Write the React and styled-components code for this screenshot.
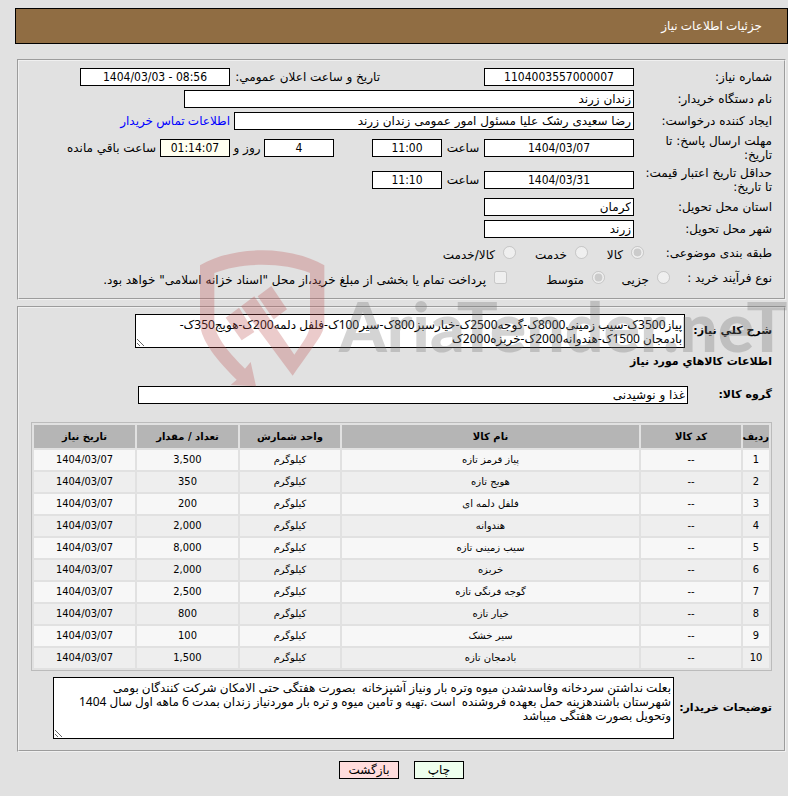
import React from 'react'
import styled, { createGlobalStyle } from 'styled-components'

const text = '"DejaVu Sans", Tahoma, sans-serif'
const digits = '"DejaVu Sans Condensed", Tahoma, sans-serif'
const mixed = '"Noto Sans", "DejaVu Sans", Tahoma, sans-serif'

const GlobalStyle = createGlobalStyle`
* {
box-sizing: border-box;
}
body {
margin: 0;
background-color: #e1e1e1;
color: #000;
font-family: ${text};
font-size: 12px;
line-height: 14px;
}
`
const Page = styled.div`
position: relative;
direction: rtl;
padding: 8px 0 16px 15px;
overflow: hidden;
`
const Header = styled.header`
display: flex;
align-items: center;
height: 36px;
padding: 0 25px;
border: 1px solid #000;
background-color: #906d43;
color: white;
`
const Title = styled.h1`
margin: 0;
font-family: ${mixed};
font-size: 12px;
font-weight: 400;
`
const Main = styled.main`
display: flex;
flex-direction: column;
grid-gap: 6px;
padding: 15px 2px 0;
`
const Panel = styled.fieldset`
margin: 0;
padding: ${props => props.$top}px 12px ${props => props.$bottom}px;
border: 2px groove #f0f0f0;
min-width: 0;
`
const Row = styled.div`
display: flex;
align-items: center;
min-height: ${props => props.$height || 22}px;
`
const Label = styled.label`
flex: none;
width: ${props => props.$width || 138}px;
`
const RowTitle = styled.span`
flex: none;
width: ${props => props.$width}px;
`
const LabelText = styled.span`
display: block;
width: 128px;
`
const SideLabel = styled.label`
flex: none;
width: 150px;
margin-right: 104px;
`
const Between = styled.label`
flex: none;
width: ${props => props.$width}px;
text-align: center;
`
const Field = styled.input`
flex: none;
width: ${props => props.$width}px;
max-width: 100%;
height: 18px;
margin: 0;
padding: 0 2px;
border: 1px solid #000;
background-color: ${props => props.$cream ? "#fffff0" : "#fff"};
color: #000;
font-family: ${props => props.$center ? digits : text};
font-size: 12px;
text-align: ${props => props.$center ? "center" : "right"};
`
const Spacer = styled.span`
flex: none;
width: 38px;
`
const Remaining = styled.span`
margin-right: 4px;
`
const Link = styled.a`
margin-right: 4px;
color: #00f;
font-family: ${mixed};
text-decoration: none;
`
const Option = styled.label`
display: flex;
align-items: center;
flex: none;
width: ${props => props.$width ? props.$width + "px" : "auto"};
grid-gap: 8px;
padding-top: 3px;
white-space: nowrap;
`
const Tick = styled.input`
flex: none;
width: 13px;
height: 13px;
margin: 0 0 4px;
`
const BoldLabel = styled.label`
flex: none;
width: ${props => props.$width}px;
font-size: 11px;
font-weight: 700;
white-space: nowrap;
`
const SubTitle = styled.h2`
margin: 0;
padding: 7px 0;
font-size: 11px;
font-weight: 700;
line-height: 14px;
`
const Area = styled.textarea`
display: block;
width: ${props => props.$width}px;
max-width: 100%;
height: ${props => props.$height}px;
margin: 0;
padding: 3px 2px 0;
border: 1px solid #000;
background-color: #fff;
color: #000;
font-family: ${mixed};
font-size: 12px;
line-height: 14px;
overflow: hidden;
`
const Table = styled.table`
width: 100%;
margin-top: 8px;
table-layout: fixed;
border: 1px solid #bbb;
border-collapse: separate;
border-spacing: 2px;
font-size: 11px;
text-align: center;
`
const Th = styled.th`
width: ${props => props.$width ? props.$width + "px" : "auto"};
height: 23px;
padding: 0;
background-color: #b5b5b5;
font-size: 10px;
white-space: nowrap;
`
const Tr = styled.tr`
background-color: #f7f7f7;
&:nth-child(even) {
background-color: #eee;
}
`
const Td = styled.td`
height: 20px;
padding: 0;
font-family: ${props => props.$digits ? digits : text};
font-size: ${props => props.$digits ? 11 : 10}px;
`
const Buttons = styled.div`
display: flex;
justify-content: center;
grid-gap: 15px;
padding-top: 3px;
`
const Button = styled.button`
width: ${props => props.$width}px;
height: 18px;
padding: 0;
border: 1px solid #000;
background-color: ${props => props.$color};
color: #000;
font-family: ${text};
font-size: 12px;
line-height: 14px;
cursor: pointer;
`
const Watermark = styled.div`
position: absolute;
top: 250px;
left: 200px;
display: flex;
direction: ltr;
grid-gap: 14px;
opacity: 0.3;
pointer-events: none;
`
const Brand = styled.span`
padding-top: 36px;
color: #737373;
font-family: Lato, sans-serif;
font-size: 68px;
font-weight: 900;
line-height: 80px;
white-space: nowrap;
`

const items = [
    { name: 'پیاز قرمز تازه', count: '3,500' },
    { name: 'هویج تازه', count: '350' },
    { name: 'فلفل دلمه ای', count: '200' },
    { name: 'هندوانه', count: '2,000' },
    { name: 'سیب زمینی تازه', count: '8,000' },
    { name: 'خربزه', count: '2,000' },
    { name: 'گوجه فرنگی تازه', count: '2,500' },
    { name: 'خیار تازه', count: '800' },
    { name: 'سیر خشک', count: '100' },
    { name: 'بادمجان تازه', count: '1,500' },
]

const summary = `پیاز3500ک-سیب زمینی8000ک-گوجه2500ک-خیارسبز800ک-سیر100ک-فلفل دلمه200ک-هویج350ک-
بادمجان 1500ک-هندوانه2000ک-خربزه2000ک`

const notes = `بعلت نداشتن سردخانه وفاسدشدن میوه وتره بار ونیاز آشپزخانه  بصورت هفتگی حتی الامکان شرکت کنندگان بومی
شهرستان باشندهزینه حمل بعهده فروشنده  است .تهیه و تامین میوه و تره بار موردنیاز زندان بمدت 6 ماهه اول سال 1404
وتحویل بصورت هفتگی میباشد`

const Logo = () => <svg width="125" height="137" viewBox="30 29 375 411" fill="#c05555" aria-hidden="true">
    <path d="M30 75C130 15 300 15 403 75V245C403 278 390 290 308 406L153 198L193 168L313 343C352 288 360 275 360 245V98C280 65 155 65 73 98V245C73 290 125 345 165 385L182 365L198 438L122 434L140 418C65 345 30 290 30 245Z" />
    <path d="M203 168L244 137L291 207L251 237Z" />
    <path d="M107 232L147 202L193 275L155 300Z" />
</svg>

const App = () => {
    return <Page>
        <GlobalStyle />
        <Header>
            <Title>جزئیات اطلاعات نیاز</Title>
        </Header>
        <Main>
            <Panel $top={5} $bottom={8}>
                <Row>
                    <Label htmlFor="number">شماره نیاز:</Label>
                    <Field id="number" $width={150} $center readOnly value="1104003557000007" />
                    <SideLabel htmlFor="announced">تاریخ و ساعت اعلان عمومي:</SideLabel>
                    <Field id="announced" dir="ltr" $width={150} $center readOnly value="1404/03/03 - 08:56" />
                </Row>
                <Row>
                    <Label htmlFor="buyer">نام دستگاه خریدار:</Label>
                    <Field id="buyer" $width={450} readOnly value="زندان زرند" />
                </Row>
                <Row>
                    <Label htmlFor="creator">ایجاد کننده درخواست:</Label>
                    <Field id="creator" $width={400} readOnly value="رضا سعیدی رشک علیا مسئول امور عمومی زندان زرند" />
                    <Link href="#contact">اطلاعات تماس خریدار</Link>
                </Row>
                <Row $height={32}>
                    <Label htmlFor="deadline"><LabelText>مهلت ارسال پاسخ: تا تاریخ:</LabelText></Label>
                    <Field id="deadline" dir="ltr" $width={150} $center readOnly value="1404/03/07" />
                    <Between htmlFor="deadlineHour" $width={42}>ساعت</Between>
                    <Field id="deadlineHour" dir="ltr" $width={70} $center readOnly value="11:00" />
                    <Spacer />
                    <Field id="days" dir="ltr" $width={70} $center readOnly value="4" />
                    <Between htmlFor="days" $width={34}>روز و</Between>
                    <Field aria-label="ساعت باقي مانده" dir="ltr" $width={70} $center $cream readOnly value="01:14:07" />
                    <Remaining>ساعت باقي مانده</Remaining>
                </Row>
                <Row $height={32}>
                    <Label htmlFor="validity"><LabelText>حداقل تاریخ اعتبار قیمت: تا تاریخ:</LabelText></Label>
                    <Field id="validity" dir="ltr" $width={150} $center readOnly value="1404/03/31" />
                    <Between htmlFor="validityHour" $width={42}>ساعت</Between>
                    <Field id="validityHour" dir="ltr" $width={70} $center readOnly value="11:10" />
                </Row>
                <Row>
                    <Label htmlFor="province">استان محل تحویل:</Label>
                    <Field id="province" $width={150} readOnly value="کرمان" />
                </Row>
                <Row>
                    <Label htmlFor="city">شهر محل تحویل:</Label>
                    <Field id="city" $width={150} readOnly value="زرند" />
                </Row>
                <Row $height={26}>
                    <RowTitle $width={128}>طبقه بندی موضوعی:</RowTitle>
                    <Option $width={56}><Tick type="radio" name="subject" disabled defaultChecked />کالا</Option>
                    <Option $width={72}><Tick type="radio" name="subject" disabled />خدمت</Option>
                    <Option><Tick type="radio" name="subject" disabled />کالا/خدمت</Option>
                </Row>
                <Row $height={24}>
                    <RowTitle $width={102}>نوع فرآیند خرید :</RowTitle>
                    <Option $width={65}><Tick type="radio" name="process" disabled />جزیی</Option>
                    <Option $width={98}><Tick type="radio" name="process" disabled defaultChecked />متوسط</Option>
                    <Option><Tick type="checkbox" disabled />پرداخت تمام یا بخشی از مبلغ خرید،از محل "اسناد خزانه اسلامی" خواهد بود.</Option>
                </Row>
            </Panel>
            <Panel $top={6} $bottom={5}>
                <Row>
                    <BoldLabel htmlFor="summary" $width={87}>شرح کلي نیاز:</BoldLabel>
                    <Area id="summary" $width={550} $height={34} readOnly value={summary} />
                </Row>
                <SubTitle>اطلاعات کالاهاي مورد نیاز</SubTitle>
                <Row $height={38}>
                    <BoldLabel htmlFor="group" $width={84}>گروه کالا:</BoldLabel>
                    <Field id="group" $width={550} readOnly value="غذا و نوشیدنی" />
                </Row>
                <Table>
                    <thead>
                        <tr>
                            <Th $width={26}>ردیف</Th>
                            <Th $width={100}>کد کالا</Th>
                            <Th>نام کالا</Th>
                            <Th $width={100}>واحد شمارش</Th>
                            <Th $width={101}>تعداد / مقدار</Th>
                            <Th $width={101}>تاریخ نیاز</Th>
                        </tr>
                    </thead>
                    <tbody>
                        {
                            items.map((item, idx) => <Tr key={idx}>
                                <Td $digits>{idx + 1}</Td>
                                <Td $digits>--</Td>
                                <Td>{item.name}</Td>
                                <Td>کیلوگرم</Td>
                                <Td $digits>{item.count}</Td>
                                <Td $digits>1404/03/07</Td>
                            </Tr>)
                        }
                    </tbody>
                </Table>
                <Row $height={74}>
                    <BoldLabel htmlFor="notes" $width={98}>توضیحات خریدار:</BoldLabel>
                    <Area id="notes" $width={621} $height={62} readOnly value={notes} />
                </Row>
            </Panel>
            <Buttons>
                <Button type="button" $width={50} $color="#efe">چاپ</Button>
                <Button type="button" $width={60} $color="#fdd">بازگشت</Button>
            </Buttons>
        </Main>
        <Watermark>
            <Logo />
            <Brand>AriaTender.neT</Brand>
        </Watermark>
    </Page>
}

export default App
